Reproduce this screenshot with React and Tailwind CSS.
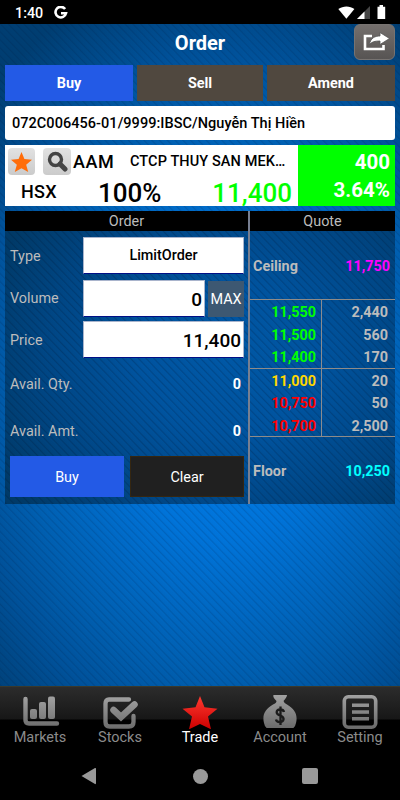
const R = "text-right whitespace-nowrap";

function StarShape({ className, fill }) {
  return (
    <svg viewBox="0 0 36 34" className={className} fill={fill}>
      <path d="M18 0 L23 12 L36 13 L26 21.5 L29.5 34 L18 27.5 L6.5 34 L10 21.5 L0 13 L13 12 Z" />
    </svg>
  );
}

function StatusBar() {
  return (
    <div className="h-6 bg-black flex items-center text-white pl-[15px] pr-[14px]">
      <span className="text-[14.3px] leading-6 font-medium w-[28px] pt-[2px]">1:40</span>
      <svg className="ml-[11px] mt-[1px]" width="14" height="14" viewBox="0 0 14 14" fill="none" stroke="#fff" strokeWidth="2.6">
        <path d="M11.1 3 A5.3 5.3 0 1 0 12 7.3 H7" />
      </svg>
      <div className="ml-auto flex items-center gap-[2px]">
        <svg width="17" height="13" viewBox="0 0 17 13" fill="#fff"><path d="M0.3 3 C5 -0.5 12 -0.5 16.4 3 L8.4 12.7 Z" /></svg>
        <svg width="13" height="13" viewBox="0 0 13 13"><path d="M0 13 L13 0 V13 Z" fill="#454545" /><path d="M0 13 L7.5 5.5 V13 Z" fill="#fff" /></svg>
        <svg className="ml-[5px]" width="9" height="14" viewBox="0 0 9 14" fill="#fff"><path d="M0.5 1.7 H2.5 V0 H6 V1.7 H8.2 V14 H0.5 Z" /></svg>
      </div>
    </div>
  );
}

function Header() {
  return (
    <div className="relative h-[41px] flex justify-center text-white">
      <h1 className="text-[20px] leading-[39px] font-bold">Order</h1>
      <button className="absolute right-[5px] top-0 w-[41px] h-[36px] rounded-[6px] bg-linear-to-b from-[#746f6d] to-[#575453] border border-[#777371] flex items-center justify-center">
        <svg width="27" height="19" viewBox="0 0 27 19" className="ml-1 mb-[2px]">
          <path d="M9 4 H2 V17 H20.5 V13" fill="none" stroke="#fff" strokeWidth="2.6" />
          <path d="M6.5 12.5 C7.5 6 12 4 17 4 V0.5 L26.5 6.5 L17 12.5 V9 C12 9 9 9.5 6.5 12.5 Z" fill="#fff" stroke="#555" strokeWidth="0.8" />
        </svg>
      </button>
    </div>
  );
}

function Tabs() {
  return (
    <div className="grid grid-cols-[128px_126px_128px] grid-rows-[36px] gap-1 h-9 mx-[5px] text-white text-[14.4px] leading-[37px] font-bold text-center">
      <div className="bg-[#235ae6]">Buy</div>
      <div className="bg-[#50483f]">Sell</div>
      <div className="bg-[#50483f]">Amend</div>
    </div>
  );
}

function Ticker() {
  return (
    <div className="mx-[5px] mt-[5px] h-[61px] flex bg-white">
      <div className="w-[293px] text-black">
        <div className="flex items-center h-[33px] pl-[3px]">
          <div className="w-[27px] h-[27px] rounded-[4px] bg-linear-to-b from-[#e2e2e2] to-[#cbcbcb] flex items-center justify-center">
            <StarShape className="w-[21px] h-[20px]" fill="#ff6d0a" />
          </div>
          <div className="ml-2 w-[28px] h-[27px] rounded-[4px] bg-linear-to-b from-[#e2e2e2] to-[#cbcbcb] flex items-center justify-center">
            <svg width="21" height="21" viewBox="0 0 21 21" fill="none" stroke="#444">
              <circle cx="8.5" cy="8.5" r="6" strokeWidth="3.4" />
              <path d="M13 13 L18 18" strokeWidth="5" strokeLinecap="round" />
            </svg>
          </div>
          <span className="ml-[2px] w-[57px] text-[18px] tracking-[0.6px] font-medium leading-8">AAM</span>
          <span className="text-[14.5px] tracking-[0.1px] font-medium leading-8 whitespace-nowrap">CTCP THUY SAN MEK…</span>
        </div>
        <div className="flex h-[28px] whitespace-nowrap font-medium">
          <span className="pl-[16px] w-[93px] text-[18px] tracking-[0.3px] leading-[27px]">HSX</span>
          <span className="text-[26px] leading-[31px] w-[64px]">100%</span>
          <span className="flex-1 text-right pr-[6px] text-[26px] leading-[31px] text-[#0f0]">11,400</span>
        </div>
      </div>
      <div className="flex-1 bg-[#0f0] text-white text-[20.5px] font-bold text-right pr-[5px] leading-[28px] pt-[3px]">
        <div>400</div>
        <div>3.64%</div>
      </div>
    </div>
  );
}

const field = "bg-white border border-[#a9b4cc] border-b-[#000f86] text-black font-medium";

function OrderForm() {
  return (
    <section className="w-[243px] text-[#bcbcbc]">
      <h2 className="h-5 bg-black text-center text-[14.4px] leading-[22px]">Order</h2>
      <div className="pl-[5px] pr-[4px] text-[14.4px]">
        <div className="flex items-center mt-[6px] h-[37px]">
          <span className="w-[73px] pt-[2px]">Type</span>
          <div className={`${field} flex-1 h-[37px] leading-[36px] text-center`}>LimitOrder</div>
        </div>
        <div className="flex items-center mt-[6px] h-[37px]">
          <span className="w-[73px]">Volume</span>
          <div className={`${field} w-[122px] h-[37px] leading-[37px] ${R} pr-[2px] text-[19px]`}>0</div>
          <div className="ml-[3px] flex-1 h-[36px] leading-[38px] text-center bg-[#3d5872] text-white">MAX</div>
        </div>
        <div className="flex items-center mt-[4px] h-[37px]">
          <span className="w-[73px] pt-[2px]">Price</span>
          <div className={`${field} flex-1 h-[37px] leading-[37px] ${R} pr-[2px] text-[19px]`}>11,400</div>
        </div>
        <div className="flex justify-between items-center h-[47px] mt-[3px] pr-[3px]">
          <span>Avail. Qty.</span><span className="font-bold text-white">0</span>
        </div>
        <div className="flex justify-between items-center h-[47px] pr-[3px]">
          <span>Avail. Amt.</span><span className="font-bold text-white">0</span>
        </div>
        <div className="grid grid-cols-2 grid-rows-[41px] gap-[6px] mt-[1px] h-[41px] leading-[43px] text-center text-white">
          <div className="bg-[#235ae6]">Buy</div>
          <div className="bg-[#202020] border border-[#352610] leading-[41px]">Clear</div>
        </div>
      </div>
    </section>
  );
}

const quotes = [
  ["11,550", "2,440", "text-[#0f0]"],
  ["11,500", "560", "text-[#0f0]"],
  ["11,400", "170", "text-[#0f0]"],
  ["11,000", "20", "text-[#ffd700]"],
  ["10,750", "50", "text-[#ff0000]"],
  ["10,700", "2,500", "text-[#ff0000]"],
];

function QuoteRows({ rows }) {
  return (
    <div className="border-t border-t-[#8f8b88]">
      {rows.map(([price, volume, color]) => (
        <div key={price} className="flex h-[22.5px] leading-[25px] text-right">
          <span className={`w-[72px] pr-[5px] border-r border-r-[#8a8b90] ${color}`}>{price}</span>
          <span className="flex-1 pr-[7px]">{volume}</span>
        </div>
      ))}
    </div>
  );
}

function QuotePanel() {
  return (
    <section className="flex-1 border-l-2 border-l-[#777f91] text-[#bcbcbc] text-[14.4px] font-bold">
      <h2 className="h-5 bg-black text-center leading-[22px] font-normal">Quote</h2>
      <div className="h-[68px] flex justify-between items-center pl-[3px] pr-[5px] pt-[3px]">
        <span>Ceiling</span><span className="text-[#f0f]">11,750</span>
      </div>
      <QuoteRows rows={quotes.slice(0, 3)} />
      <QuoteRows rows={quotes.slice(3)} />
      <div className="border-t border-t-[#8f8b88] h-[69px] flex justify-between items-center pl-[3px] pr-[5px] pt-px">
        <span>Floor</span><span className="text-[#0ff]">10,250</span>
      </div>
    </section>
  );
}

function BottomTabs() {
  const item = "flex flex-col items-center text-[14.5px] leading-[17px]";
  return (
    <nav className="h-[67px] grid grid-cols-5 pt-[9px] border-t border-[#39392c] text-[#8b8b8b] bg-[linear-gradient(#2c2c2c_0,#171717_32px,#000_33px)]">
      <svg width="0" height="0" className="absolute">
        <linearGradient id="metal" x1="0" y1="0" x2="0" y2="36" gradientUnits="userSpaceOnUse">
          <stop offset="0" stopColor="#a2a2a2" /><stop offset="1" stopColor="#666" />
        </linearGradient>
        <linearGradient id="red" x1="0" y1="0" x2="0" y2="1">
          <stop offset="0" stopColor="#ff3a30" /><stop offset="1" stopColor="#cc0000" />
        </linearGradient>
      </svg>
      <div className={item}>
        <svg width="40" height="33" viewBox="0 0 40 33" fill="none" stroke="url(#metal)" strokeLinecap="round" strokeLinejoin="round">
          <path d="M5.5 3 V24 Q5.5 27.5 9 27.5 H37" strokeWidth="4.4" />
          <g fill="url(#metal)" stroke="none"><rect x="10" y="13" width="7" height="10" rx="2" /><rect x="19" y="6" width="7" height="17" rx="2" /><rect x="28" y="0.5" width="7" height="22.5" rx="2" /></g>
        </svg>
        <span>Markets</span>
      </div>
      <div className={item}>
        <svg width="36" height="33" viewBox="0 0 36 33" fill="none" stroke="url(#metal)" strokeLinecap="round">
          <path d="M27 3.5 H7 Q3.5 3.5 3.5 7.5 V26 Q3.5 30.5 7.5 30.5 H27 Q31.5 30.5 31.5 26 V20" strokeWidth="4.3" />
          <path d="M11.5 14 L19 21 L32.5 8.5" strokeWidth="6.5" />
        </svg>
        <span>Stocks</span>
      </div>
      <div className={`${item} text-white`}>
        <svg width="36" height="33" viewBox="0 0 36 33"><path transform="scale(1 .98)" d="M18 0 L22.5 11.5 L35.5 13 L26 21 L29 34 L18 28.5 L7 34 L10 21 L0.5 13 L13.5 11.5 Z" fill="url(#red)" /></svg>
        <span>Trade</span>
      </div>
      <div className={item}>
        <svg width="34" height="33" viewBox="0 0 34 33" className="-mt-px mb-px">
          <path d="M10.5 0 Q13 -0.5 17 0 Q21 -0.5 24 0 Q24 2 20.5 6 Q21 8 24 9.5 C32 14 35 20 33 28 Q32 34 27 34 H7 Q2 34 1 28 C-1 20 2 14 10 9.5 Q13.5 8 13.5 6 Q9.5 2 10.5 0 Z" fill="url(#metal)" />
          <path d="M21 17 Q20.5 14.5 17 14.5 Q13.5 14.7 13.7 17.5 Q14 19.5 17.3 20.5 Q21 22 20.5 24.5 Q20 27 16.7 27 Q13.5 27 13 24.5 M17.5 11.5 V30" stroke="#1b1b1b" strokeWidth="2.3" fill="none" />
        </svg>
        <span>Account</span>
      </div>
      <div className={item}>
        <svg width="36" height="34" viewBox="0 0 36 34" fill="none" stroke="url(#metal)" className="-mt-px">
          <rect x="2.3" y="1.8" width="31.4" height="30.4" rx="4" strokeWidth="3.6" />
          <g fill="url(#metal)" stroke="none"><rect x="10" y="8.5" width="17" height="3.5" /><rect x="10" y="15.3" width="17" height="3.5" /><rect x="10" y="22" width="17" height="3.5" /></g>
        </svg>
        <span>Setting</span>
      </div>
    </nav>
  );
}

function SystemNav() {
  return (
    <div className="h-[47px] bg-black flex items-center pl-[81px] pb-px">
      <svg width="16" height="18" viewBox="0 0 16 18" fill="#999"><path d="M0.5 9 L14 1 Q15 0.5 15 2 V16 Q15 17.5 14 17 Z" /></svg>
      <div className="ml-[96px] w-[15px] h-[15px] rounded-full bg-[#999]" />
      <div className="ml-[94px] w-4 h-4 rounded-[2px] bg-[#999]" />
    </div>
  );
}

export default function App() {
  return (
    <div className="w-[400px] h-[800px] overflow-hidden flex flex-col font-['Roboto',sans-serif]">
      <StatusBar />
      <main className="flex-1 bg-[repeating-linear-gradient(46deg,rgba(0,20,55,0.02)_0,rgba(0,20,55,0.15)_1px,rgba(0,20,55,0.02)_2.2px,transparent_5.6px),radial-gradient(ellipse_310px_420px_at_225px_375px,#007de8_0%,#0074da_33%,#0060b2_65%,#00529b_82%,#003e72_105%)]">
        <Header />
        <Tabs />
        <div className="mx-[5px] mt-[5px] h-[34px] rounded-[3px] bg-white text-black pl-[7px] text-[14.5px] tracking-[0.045px] leading-[35px] font-medium whitespace-nowrap">072C006456-01/9999:IBSC/Nguyễn Thị Hiền</div>
        <Ticker />
        <div className="mx-[5px] mt-[5px] h-[293px] flex bg-[repeating-linear-gradient(46deg,rgba(0,15,40,0.02)_0,rgba(0,15,40,0.2)_1px,rgba(0,15,40,0.02)_2.2px,transparent_5.6px),radial-gradient(ellipse_250px_210px_at_225px_150px,#0058a6_0%,#0054a0_35%,#004684_75%,#003a68_105%)]">
          <OrderForm />
          <QuotePanel />
        </div>
      </main>
      <BottomTabs />
      <SystemNav />
    </div>
  );
}
